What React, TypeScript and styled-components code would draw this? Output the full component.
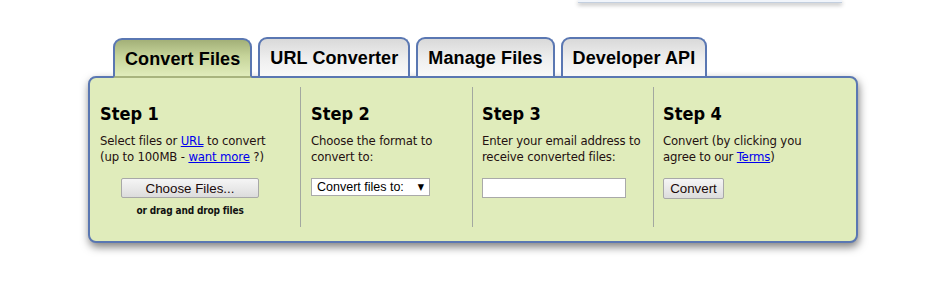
import React from 'react'
import { styled, createGlobalStyle } from 'styled-components'

const GlobalStyle = createGlobalStyle`
body {
  margin: 0;
  background: #fff;
  font-family: "DejaVu Sans Condensed", "DejaVu Sans", sans-serif;
}
`

const tabs = ['Convert Files', 'URL Converter', 'Manage Files', 'Developer API']

const App = () => {
  return (
    <Page>
      <GlobalStyle />
      <TopStrip />
      <Wrapper>
        <TabRow>
          {tabs.map((t, i) => (
            <Tab key={t} $active={i === 0}>{t}</Tab>
          ))}
        </TabRow>
        <Panel>
          <Column $w="210px" $first>
            <Heading>Step 1</Heading>
            <Text>
              Select files or <Link href="#">URL</Link> to convert<br />
              (up to 100MB - <Link href="#">want more</Link> ?)
            </Text>
            <Center>
              <Button $w="138px">Choose Files...</Button>
              <Hint>or drag and drop files</Hint>
            </Center>
          </Column>
          <Column $w="172px">
            <Heading>Step 2</Heading>
            <Text>
              Choose the format to<br />
              convert to:
            </Text>
            <SelectBox>
              <Select defaultValue="">
                <option value="">Convert files to:</option>
              </Select>
            </SelectBox>
          </Column>
          <Column $w="181px" $pad="9px">
            <Heading>Step 3</Heading>
            <Text>
              Enter your email address to<br />
              receive converted files:
            </Text>
            <Input type="text" />
          </Column>
          <Column $w="auto" $pad="9px">
            <Heading>Step 4</Heading>
            <Text>
              Convert (by clicking you<br />
              agree to our <Link href="#">Terms</Link>)
            </Text>
            <Button $w="61px" $h="21px">Convert</Button>
          </Column>
        </Panel>
      </Wrapper>
    </Page>
  )
}

export default App

const Page = styled.div`
width: 951px;
height: 288px;
overflow: hidden;
`
const TopStrip = styled.div`
margin-left: 578px;
width: 264px;
height: 2px;
background: #f1f5fb;
border-bottom: 1px solid #c3cfdf;
box-shadow: 0 2px 4px rgba(0, 0, 0, 0.3);
`
const Wrapper = styled.div`
margin: 34px 0 0 88px;
width: 770px;
`
const TabRow = styled.div`
display: flex;
align-items: flex-end;
gap: 6px;
padding-left: 25px;
position: relative;
z-index: 1;
`
const Tab = styled.div<{ $active?: boolean }>`
box-sizing: border-box;
height: ${p => (p.$active ? '40px' : '39px')};
margin-bottom: ${p => (p.$active ? '-2px' : '0')};
padding: 8px 10px 0;
border: 2px solid #5a77b2;
border-bottom: ${p => (p.$active ? '2px solid #a8b47e' : 'none')};
border-radius: 9px 9px 0 0;
background: ${p =>
  p.$active
    ? 'linear-gradient(to bottom, #a3b078 0%, #c6d49a 45%, #e0ecbb 100%)'
    : 'linear-gradient(to bottom, #d9d9d9 0%, #efefef 55%, #f9f9f9 100%)'};
font-family: "Liberation Sans", Arial, sans-serif;
font-weight: bold;
font-size: 18px;
line-height: 22px;
letter-spacing: 0.1px;
color: #000;
white-space: nowrap;
`
const Panel = styled.div`
display: flex;
padding: 9px 0 14px;
background: #e0ecbb;
border: 2px solid #5a77b2;
border-radius: 8px;
box-shadow: 1px 4px 8px rgba(0, 0, 0, 0.5);
`
const Column = styled.div<{ $w: string; $first?: boolean; $pad?: string }>`
box-sizing: border-box;
flex: ${p => (p.$w === 'auto' ? '1' : `0 0 ${p.$w}`)};
height: 140px;
padding: 16px ${p => (p.$first ? '20px' : '8px')} 0 ${p => p.$pad || '10px'};
border-left: ${p => (p.$first ? 'none' : '1px solid #a3a8a0')};
`
const Heading = styled.div`
font-weight: bold;
font-size: 18px;
line-height: 22px;
color: #000;
`
const Text = styled.div`
margin-top: 8px;
font-size: 13px;
line-height: 16px;
letter-spacing: -0.15px;
color: #241010;
white-space: nowrap;
`
const Link = styled.a`
color: #0000ee;
text-decoration: underline;
`
const Center = styled.div`
display: flex;
flex-direction: column;
align-items: center;
`
const Button = styled.button<{ $w: string; $h?: string }>`
display: block;
box-sizing: border-box;
width: ${p => p.$w};
height: ${p => p.$h || '20px'};
margin-top: 13px;
padding: 0;
border: 1px solid #a8a8a8;
border-radius: 2px;
background: linear-gradient(to bottom, #f5f5f5 0%, #e9e9e9 50%, #dcdcdc 100%);
font-family: "Liberation Sans", Arial, sans-serif;
font-size: 13.33px;
color: #1a0a0a;
`
const Hint = styled.div`
margin-top: 6px;
font-weight: bold;
font-size: 10px;
line-height: 14px;
letter-spacing: -0.15px;
color: #111;
`
const SelectBox = styled.div`
position: relative;
width: 119px;
margin-top: 13px;
&::after {
  content: '▼';
  position: absolute;
  right: 6px;
  top: 3px;
  font-size: 9px;
  line-height: 12px;
  color: #000;
  pointer-events: none;
}
`
const Select = styled.select`
appearance: none;
display: block;
box-sizing: border-box;
width: 119px;
height: 18px;
padding: 0 0 0 5px;
border: 1px solid #aaa;
border-radius: 0;
background: #fff;
font-family: "Liberation Sans", Arial, sans-serif;
font-size: 12.5px;
color: #000;
`
const Input = styled.input`
display: block;
box-sizing: border-box;
width: 144px;
height: 20px;
margin-top: 13px;
border: 1px solid #a9a9a9;
background: #fff;
`
